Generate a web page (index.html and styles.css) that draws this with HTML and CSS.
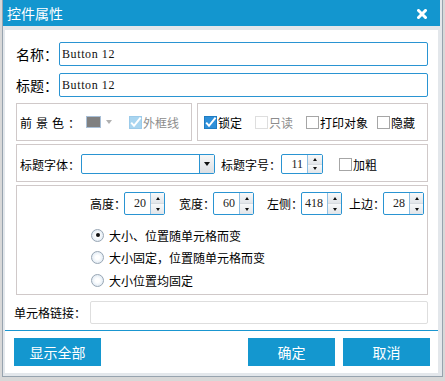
FILE: index.html
```html
<!DOCTYPE html>
<html>
<head>
<meta charset="utf-8">
<link rel="stylesheet" href="styles.css">
</head>
<body>
<div class="dialog">
  <div class="titlebar">
    <span class="title">控件属性</span>
    <svg class="close" viewBox="0 0 10 10"><path d="M1.5 1.5L8.5 8.5M8.5 1.5L1.5 8.5" stroke="#fff" stroke-width="3" stroke-linecap="square"/></svg>
  </div>
  <div class="content">
    <div class="main">
      <div class="field-row"><span class="lbl-big">名称：</span><div class="textbox">Button 12</div></div>
      <div class="field-row"><span class="lbl-big">标题：</span><div class="textbox">Button 12</div></div>

      <div class="group-row">
        <div class="group g-color">
          <span class="lbl-spaced">前景色：</span>
          <span class="swatch"></span>
          <span class="caret-gray"></span>
          <span class="chk chk-outline">
            <svg class="cb" viewBox="0 0 13 13"><rect x=".5" y=".5" width="12" height="12" fill="#a9d5f0" stroke="#9ccbea"/><path d="M2.2 6.6L5 9.8L11.6 1.6" stroke="#fff" stroke-width="2" fill="none"/></svg>
            <span class="dis">外框线</span>
          </span>
        </div>
        <div class="group g-flags">
          <span class="chk">
            <svg class="cb" viewBox="0 0 13 13"><rect x=".5" y=".5" width="12" height="12" fill="#2e8fd9" stroke="#1f7cc2"/><path d="M2.2 6.6L5 9.8L11.6 1.6" stroke="#fff" stroke-width="2" fill="none"/></svg>
            <span>锁定</span>
          </span>
          <span class="chk">
            <svg class="cb" viewBox="0 0 13 13"><rect x=".5" y=".5" width="12" height="12" fill="#fff" stroke="#dedede"/></svg>
            <span class="dis">只读</span>
          </span>
          <span class="chk">
            <svg class="cb" viewBox="0 0 13 13"><rect x=".5" y=".5" width="12" height="12" fill="#fff" stroke="#a6a6a6"/></svg>
            <span>打印对象</span>
          </span>
          <span class="chk">
            <svg class="cb" viewBox="0 0 13 13"><rect x=".5" y=".5" width="12" height="12" fill="#fff" stroke="#a6a6a6"/></svg>
            <span>隐藏</span>
          </span>
        </div>
      </div>

      <div class="group g-font">
        <span class="lbl-font">标题字体：</span>
        <div class="combo"><span class="combo-text"></span><span class="combo-btn"><i class="caret-black"></i></span></div>
        <span class="lbl-size">标题字号：</span>
        <div class="spin spin-small"><span class="spin-val">11</span><span class="spin-btns"><span class="sb"><i class="up"></i></span><span class="sb"><i class="down"></i></span></span></div>
        <span class="chk chk-bold">
          <svg class="cb" viewBox="0 0 13 13"><rect x=".5" y=".5" width="12" height="12" fill="#fff" stroke="#a6a6a6"/></svg>
          <span>加粗</span>
        </span>
      </div>

      <div class="group g-pos">
        <div class="pos-row">
          <div class="pf"><span class="pf-lbl">高度：</span><div class="spin"><span class="spin-val">20</span><span class="spin-btns"><span class="sb"><i class="up"></i></span><span class="sb"><i class="down"></i></span></span></div></div>
          <div class="pf"><span class="pf-lbl">宽度：</span><div class="spin"><span class="spin-val">60</span><span class="spin-btns"><span class="sb"><i class="up"></i></span><span class="sb"><i class="down"></i></span></span></div></div>
          <div class="pf"><span class="pf-lbl">左侧：</span><div class="spin"><span class="spin-val">418</span><span class="spin-btns"><span class="sb"><i class="up"></i></span><span class="sb"><i class="down"></i></span></span></div></div>
          <div class="pf"><span class="pf-lbl">上边：</span><div class="spin"><span class="spin-val">28</span><span class="spin-btns"><span class="sb"><i class="up"></i></span><span class="sb"><i class="down"></i></span></span></div></div>
        </div>
        <div class="radios">
          <div class="rad"><span class="radio"><i class="dot"></i></span><span>大小、位置随单元格而变</span></div>
          <div class="rad"><span class="radio"></span><span>大小固定，位置随单元格而变</span></div>
          <div class="rad"><span class="radio"></span><span>大小位置均固定</span></div>
        </div>
      </div>

      <div class="link-row"><span class="link-lbl">单元格链接：</span><div class="link-input"></div></div>
    </div>
    <div class="sep"></div>
    <div class="footer">
      <div class="btn">显示全部</div>
      <div class="btn btn-ok">确定</div>
      <div class="btn btn-cancel">取消</div>
    </div>
  </div>
</div>
</body>
</html>
```

FILE: styles.css
```css
* { box-sizing: border-box; }
html, body { margin: 0; padding: 0; }
body {
  background: #d8d8d8;
  font-family: "Noto Sans CJK SC", "Noto Sans", sans-serif;
  font-size: 12px;
  color: #000;
  width: 445px;
  height: 381px;
  overflow: hidden;
}
.dialog {
  margin-left: 2px;
  width: 441px;
  height: 377px;
  border: 1px solid #97a3ae;
  border-top: 0;
  background: #e3e7eb;
  display: flex;
  flex-direction: column;
}
.titlebar {
  height: 26px;
  flex: none;
  margin-right: 2px;
  background: #1396cf;
  color: #fff;
  display: flex;
  align-items: center;
  justify-content: space-between;
  padding: 0 13px 0 4px;
  font-size: 14px;
}
.close { width: 10px; height: 10px; margin-top: 1px; }
.content {
  margin: 4px 4px 0 2px;
  background: #fff;
  height: 343px;
  display: flex;
  flex-direction: column;
}
.main {
  padding: 12px 10px 0 11px;
  display: flex;
  flex-direction: column;
}
.field-row { display: flex; align-items: center; height: 24px; }
.field-row + .field-row { margin-top: 7px; }
.lbl-big { font-size: 14px; width: 43px; flex: none; white-space: nowrap; }
.textbox {
  flex: 1;
  height: 24px;
  border: 1px solid #2a94d2;
  border-radius: 2px;
  font-family: "Liberation Serif", serif;
  font-size: 12px;
  letter-spacing: 0.6px;
  padding-left: 2px;
  display: flex;
  align-items: center;
  color: #111;
}
.group-row { display: flex; gap: 5px; margin-top: 6px; height: 38px; }
.group { border: 1px solid #d0c9c9; display: flex; align-items: center; }
.g-color { width: 176px; padding-left: 3px; }
.g-flags {
  flex: 1;
  padding-left: 6px;
  display: grid;
  grid-template-columns: 51px 51px 71px auto;
  align-items: center;
}
.lbl-spaced { letter-spacing: 4px; width: 66px; flex: none; white-space: nowrap; }
.swatch {
  width: 15px;
  height: 12px;
  border: 1px solid #a9bfd6;
  background: #808080;
  flex: none;
}
.caret-gray {
  margin-left: 5px;
  width: 0;
  height: 0;
  border-left: 3.5px solid transparent;
  border-right: 3.5px solid transparent;
  border-top: 4px solid #b0b0b0;
}
.chk { display: flex; align-items: center; gap: 1px; white-space: nowrap; }
.chk-outline { margin-left: 17px; }
.cb { width: 13px; height: 13px; flex: none; overflow: visible; }
.dis { color: #8c8c8c; }

.g-font { margin-top: 3px; height: 38px; padding-left: 3px; padding-top: 2px; }
.lbl-font { width: 61px; flex: none; white-space: nowrap; }
.combo {
  width: 134px;
  height: 20px;
  border: 1px solid #2a94d2;
  border-radius: 2px;
  display: flex;
  flex: none;
}
.combo-text { flex: 1; }
.combo-btn {
  width: 15px;
  border-left: 1px solid #2a94d2;
  background: linear-gradient(#f7f7f7, #dcdfe3);
  display: flex;
  align-items: center;
  justify-content: center;
}
.caret-black {
  width: 0;
  height: 0;
  border-left: 3.5px solid transparent;
  border-right: 3.5px solid transparent;
  border-top: 4px solid #111;
}
.lbl-size { margin-left: 6px; width: 60px; flex: none; white-space: nowrap; }
.chk-bold { margin-left: 16px; }

.spin {
  width: 41px;
  height: 23px;
  border: 1px solid #2a94d2;
  border-radius: 2px;
  display: flex;
  flex: none;
  background: #fff;
}
.spin-small { width: 42px; height: 20px; }
.spin-val {
  flex: 1;
  text-align: right;
  padding-right: 4px;
  font-family: "Liberation Serif", serif;
  font-size: 12px;
  display: flex;
  align-items: center;
  justify-content: flex-end;
  color: #222;
}
.spin-btns {
  width: 14px;
  border-left: 1px solid #8fc0e4;
  display: flex;
  flex-direction: column;
}
.spin-small .spin-btns { width: 15px; }
.sb {
  flex: 1;
  display: flex;
  align-items: center;
  justify-content: center;
  background: linear-gradient(#f8f9fa, #e2e5e9);
}
.sb + .sb { border-top: 1px solid #d6dbe0; }
.up {
  width: 0; height: 0;
  border-left: 2.5px solid transparent;
  border-right: 2.5px solid transparent;
  border-bottom: 3px solid #111;
}
.down {
  width: 0; height: 0;
  border-left: 2.5px solid transparent;
  border-right: 2.5px solid transparent;
  border-top: 3px solid #111;
}

.g-pos {
  margin-top: 3px;
  height: 110px;
  padding: 6px 0 0 73px;
  flex-direction: column;
  align-items: flex-start;
}
.pos-row {
  display: grid;
  grid-template-columns: 89px 88px 82px auto;
  height: 23px;
}
.pf { display: flex; align-items: center; }
.pf-lbl { width: 34px; flex: none; white-space: nowrap; }
.radios { margin-top: 9px; display: flex; flex-direction: column; }
.rad { height: 22.5px; display: flex; align-items: center; gap: 5px; padding-left: 1px; }
.radio {
  width: 13px;
  height: 13px;
  border-radius: 50%;
  border: 1px solid #98a6b4;
  background: radial-gradient(circle, #ffffff 25%, #d3e1ee 100%);
  display: flex;
  align-items: center;
  justify-content: center;
  flex: none;
}
.dot { width: 4px; height: 4px; border-radius: 50%; background: #111; }

.link-row { margin-top: 6px; display: flex; align-items: center; height: 23px; }
.link-lbl { width: 76px; margin-left: -2px; flex: none; white-space: nowrap; }
.link-input { flex: 1; height: 23px; border: 1px solid #dedede; border-radius: 2px; }
.sep { margin-top: 6px; height: 1px; background: #1a96d0; flex: none; }
.footer { padding: 7px 8px 7px 9px; display: flex; }
.btn {
  width: 87px;
  height: 28px;
  background: #1497cf;
  color: #fff;
  font-size: 14px;
  display: flex;
  align-items: center;
  justify-content: center;
}
.btn-ok { margin-left: auto; }
.btn-cancel { margin-left: 8px; }
```
